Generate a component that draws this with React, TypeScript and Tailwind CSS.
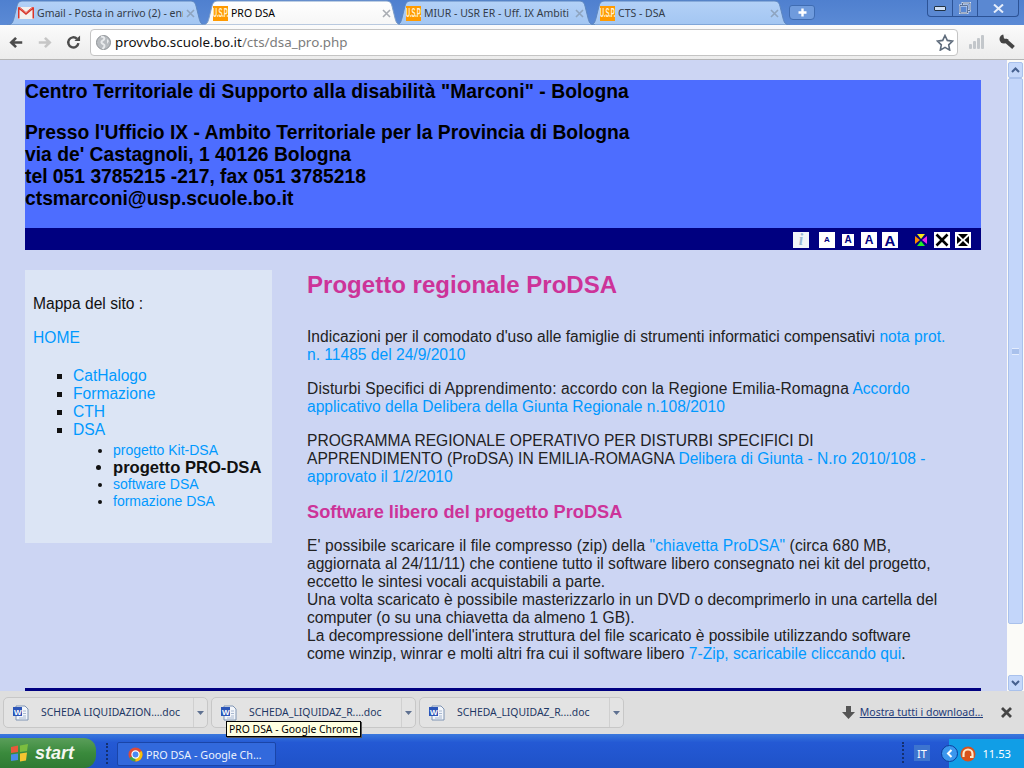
import React from "react";

const sans = "font-['Liberation_Sans',Arial,sans-serif]";
const ui = "font-['Noto_Sans',Verdana,sans-serif]";

function Usp() {
  return (
    <span className="flex h-[15px] w-[15px] shrink-0 items-center justify-center overflow-hidden bg-[#ff9a00] font-['Liberation_Sans',sans-serif] text-[6px] font-bold leading-none tracking-[-0.2px] text-[#fff2d0]">
      <span className="scale-y-[2]">U.S.P.</span>
    </span>
  );
}

function Gmail() {
  return (
    <svg width="16" height="12" viewBox="0 0 16 12" className="shrink-0">
      <rect x="0" y="0" width="16" height="12" fill="#f4f0ee" />
      <path d="M0.7 11.5V1L8 7l7.3-6v10.5" fill="none" stroke="#d8352a" strokeWidth="1.6" />
      <path d="M0 0.5h2L8 5.5l6-5h2" fill="none" stroke="#e2584f" strokeWidth="1" />
    </svg>
  );
}

function TabShape({ active }: { active?: boolean }) {
  const id = active ? "tab-active" : "tab-idle";
  return (
    <svg className="absolute inset-0 h-full w-full" viewBox="0 0 200 25" preserveAspectRatio="none">
      <defs>
        <linearGradient id={id} x1="0" y1="0" x2="0" y2="1">
          <stop offset="0" stopColor={active ? "#ffffff" : "#b3d1f7"} />
          <stop offset="1" stopColor={active ? "#f6f6f6" : "#a3c6f2"} />
        </linearGradient>
      </defs>
      <path
        d="M0 25C5 25 6 22 7 18L10 6C11 2 13 1 16 1H184C187 1 189 2 190 6L193 18C194 22 195 25 200 25Z"
        fill={`url(#${id})`}
        stroke={active ? "#7d9dc8" : "#5d86bf"}
        strokeWidth="1"
        vectorEffect="non-scaling-stroke"
      />
    </svg>
  );
}

function Tab({ title, icon, active, w, ml, z }: { title: string; icon: React.ReactNode; active?: boolean; w: string; ml: string; z: string }) {
  return (
    <div className={`relative flex h-[25px] shrink-0 items-center ${w} ${ml} ${z}`}>
      <TabShape active={active} />
      <div className="relative flex w-full items-center gap-[3px] pl-[11px] pr-[11px] pt-[1px]">
        {icon}
        <span className={`min-w-0 flex-1 overflow-hidden whitespace-nowrap text-[10.5px] leading-[15px] ${ui} ${active ? "text-black" : "text-[#333c49]"}`}>{title}</span>
        <svg width="9" height="9" viewBox="0 0 9 9" className="shrink-0">
          <path d="M1 1l7 7M8 1l-7 7" stroke={active ? "#a9adb3" : "#8ea4bf"} strokeWidth="1.6" />
        </svg>
      </div>
    </div>
  );
}

function TabBar() {
  return (
    <div className="flex h-[25px] shrink-0 items-start bg-gradient-to-b from-[#4f80cf] to-[#5b8ad5]">
      <div className="flex pl-[7px]">
        <Tab title="Gmail - Posta in arrivo (2) - enr" icon={<Gmail />} w="w-[199px]" ml="ml-0" z="z-10" />
        <Tab title="PRO DSA" icon={<Usp />} active w="w-[200px]" ml="ml-[-4px]" z="z-30" />
        <Tab title="MIUR - USR ER - Uff. IX Ambiti" icon={<Usp />} w="w-[200px]" ml="ml-[-7px]" z="z-20" />
        <Tab title="CTS - DSA" icon={<Usp />} w="w-[201px]" ml="ml-[-6px]" z="z-10" />
      </div>
      <div className="ml-[-1px] mt-[5px] flex h-[15px] w-[26px] items-center justify-center rounded-b-[4px] rounded-t-[3px] border border-[#3f6cb2] bg-[#6f9bdd] text-white">
        <svg width="9" height="9" viewBox="0 0 9 9"><path d="M4.5 0.5v8M0.5 4.5h8" stroke="#fff" strokeWidth="2.4" /></svg>
      </div>
      <div className="ml-auto mr-[5px] flex h-[17px] w-[92px] items-center rounded-b-[4px] border border-t-0 border-[#2c5396] bg-[#5a88d2]">
        <div className="flex h-full w-[25px] items-center justify-center border-r border-[#2c5396]">
          <div className="h-[5px] w-[12px] rounded-[1px] border border-[#234] bg-[#cfe0f7]" />
        </div>
        <div className="flex h-full w-[25px] items-center justify-center border-r border-[#2c5396]">
          <svg width="12" height="12" viewBox="0 0 12 12"><path d="M3.5 3V1h7.500v7.500H9M1 3.500h7.500V11H1z" fill="none" stroke="#e6eefb" strokeWidth="1.800" /><path d="M3.500 3V1h7.500v7.500H9M1 3.500h7.500V11H1z" fill="none" stroke="#24406f" strokeWidth="0.7" /></svg>
        </div>
        <div className="flex h-full flex-1 items-center justify-center">
          <svg width="11" height="9" viewBox="0 0 11 9"><path d="M1 0.5l9 8M10 0.5l-9 8" stroke="#e6eefb" strokeWidth="2" /></svg>
        </div>
      </div>
    </div>
  );
}

function Toolbar() {
  return (
    <div className="flex h-[35px] shrink-0 items-center border-b border-[#b5b5b5] bg-gradient-to-b from-[#fbfbfb] to-[#ececec]">
      <div className="flex w-[90px] shrink-0 items-center pl-[9px]">
        <svg width="15" height="13" viewBox="0 0 17 14" className="mr-[13px]"><path d="M15 7H4M8 1.800L2.600 7 8 12.200" fill="none" stroke="#4c4c4c" strokeWidth="3" /></svg>
        <svg width="15" height="13" viewBox="0 0 17 14" className="mr-[14px]"><path d="M2 7h11M9 1.800L14.400 7 9 12.200" fill="none" stroke="#c6c6c6" strokeWidth="3" /></svg>
        <svg width="15" height="15" viewBox="0 0 16 16"><path d="M13.200 8.600A5.400 5.400 0 1 1 11.600 4" fill="none" stroke="#4c4c4c" strokeWidth="2.600" /><path d="M9 6.400h6V0.600z" fill="#4c4c4c" /></svg>
      </div>
      <div className="flex h-[27px] w-[868px] items-center rounded-[4px] border border-[#c4c4c4] bg-white pl-[5px]">
        <svg width="15" height="15" viewBox="0 0 15 15" className="shrink-0">
          <circle cx="7.5" cy="7.5" r="7" fill="#b8bcc0" stroke="#8e9296" />
          <path d="M5 1.500C8 2 9 3 8 4.500S5 5.500 5.500 7.500 9 9 8.500 11 7 13 6.500 14" fill="none" stroke="#e8eaec" strokeWidth="2" />
          <path d="M11 4l2 2-2 3z" fill="#e8eaec" />
        </svg>
        <span className={`ml-[4px] whitespace-nowrap text-[13.4px] leading-[20px] ${ui} text-[#111]`}>
          provvbo.scuole.bo.it<span className="text-[#7c7c7c]">/cts/dsa_pro.php</span>
        </span>
        <svg width="18" height="17" viewBox="0 0 18 17" className="ml-auto mr-[3px] shrink-0">
          <path d="M9 1.500l2.300 4.900 5.300.7-3.900 3.700 1 5.300L9 13.400l-4.700 2.700 1-5.300-3.900-3.700 5.300-.7z" fill="#fff" stroke="#5e6b7b" strokeWidth="1.600" />
        </svg>
      </div>
      <div className="ml-[11px] flex h-[14px] items-end gap-[1px]">
        <div className="h-[5px] w-[3px] rounded-[1px] bg-[#c3c7cb]" />
        <div className="h-[8px] w-[3px] rounded-[1px] bg-[#c3c7cb]" />
        <div className="h-[11px] w-[3px] rounded-[1px] bg-[#c3c7cb]" />
        <div className="h-[14px] w-[3px] rounded-[1px] bg-[#c3c7cb]" />
      </div>
      <svg width="17" height="16" viewBox="0 0 17 16" className="ml-[15px]">
        <circle cx="5" cy="5" r="4.500" fill="#444" />
        <path d="M4 -1L5 4.500 10.500 5.500 10 -1z" fill="#f3f3f3" />
        <path d="M6 6l8.500 7.500" stroke="#444" strokeWidth="4" />
      </svg>
    </div>
  );
}

function A({ children }: { children: React.ReactNode }) {
  return <a className="text-[#0099ff]">{children}</a>;
}

function AccIcon({ size, boxed }: { size: number; boxed?: boolean }) {
  return (
    <span className="relative flex h-[16px] w-[16px] items-center justify-center bg-white">
      {boxed && <span className="absolute inset-0 border-2 border-[#000080]" />}
      <span className={`${sans} font-bold leading-none text-[#000080]`} style={{ fontSize: size }}>A</span>
    </span>
  );
}

function HeaderBlock() {
  return (
    <div className={`${sans} w-[956px] text-black`}>
      <div className="h-[148px] bg-[#4d6dff] pt-[1px] text-[19.3px] font-bold leading-[22px]">
        <p className="tracking-[0.08px]">Centro Territoriale di Supporto alla disabilità "Marconi" - Bologna</p>
        <p className="mt-[19px]">Presso l'Ufficio IX - Ambito Territoriale per la Provincia di Bologna</p>
        <p>via de' Castagnoli, 1 40126 Bologna</p>
        <p>tel 051 3785215 -217, fax 051 3785218</p>
        <p>ctsmarconi@usp.scuole.bo.it</p>
      </div>
      <div className="flex h-[22px] items-center justify-end bg-[#000080] pr-[10px] pt-[2px]">
        <span className="flex h-[16px] w-[16px] items-center justify-center bg-[#f1f5f8] font-['Liberation_Serif',serif] text-[16px] font-bold italic leading-none text-[#9cbad3]">i</span>
        <span className="ml-[10px]"><AccIcon size={8} /></span>
        <span className="ml-[5px]"><AccIcon size={10} boxed /></span>
        <span className="ml-[5px]"><AccIcon size={12} /></span>
        <span className="ml-[5px]"><AccIcon size={15} /></span>
        <svg width="16" height="16" viewBox="0 0 16 16" className="ml-[15px]">
          <rect width="16" height="16" fill="#000080" />
          <path d="M4 2h8L8 7z" fill="#f4e619" />
          <path d="M14 4v8L9 8z" fill="#ee22ee" />
          <path d="M12 14H4l4-5z" fill="#22ee22" />
          <path d="M2 4v8l5-4z" fill="#ff8800" />
        </svg>
        <svg width="16" height="16" viewBox="0 0 16 16" className="ml-[5px]">
          <rect width="16" height="16" fill="#fff" />
          <path d="M2.500 2.500l11 11M13.500 2.500l-11 11" stroke="#000" strokeWidth="2.600" />
        </svg>
        <svg width="16" height="16" viewBox="0 0 16 16" className="ml-[5px]">
          <rect width="16" height="16" fill="#fff" />
          <path d="M3 2h10L8 7zM3 14h10L8 9z" fill="#000" />
          <path d="M2 4v8l4.500-4zM14 4v8L9.500 8z" fill="#000" />
        </svg>
      </div>
    </div>
  );
}

function Sidebar() {
  return (
    <aside className={`${sans} h-[273px] w-[247px] shrink-0 bg-[#dce5f5] pl-[8px] pt-[25px] text-[15.6px] leading-[18px] text-[#111]`}>
      <p>Mappa del sito :</p>
      <p className="mt-[16px]"><A>HOME</A></p>
      <ul className="mt-[20px] list-[square] pl-[40px]">
        <li><A>CatHalogo</A></li>
        <li><A>Formazione</A></li>
        <li><A>CTH</A></li>
        <li>
          <A>DSA</A>
          <ul className="mt-[3px] list-disc pl-[40px] text-[14px] leading-[17px]">
            <li><A>progetto Kit-DSA</A></li>
            <li className="text-[16.6px] font-bold">progetto PRO-DSA</li>
            <li><A>software DSA</A></li>
            <li><A>formazione DSA</A></li>
          </ul>
        </li>
      </ul>
    </aside>
  );
}

function Main() {
  return (
    <main className={`${sans} ml-[35px] w-[640px] pt-[1px] text-[15.6px] leading-[18px] text-[#222]`}>
      <h1 className="text-[24px] font-bold leading-[27px] tracking-[0.03px] text-[#cc3399]">Progetto regionale ProDSA</h1>
      <p className="mt-[30px]">Indicazioni per il comodato d'uso alle famiglie di strumenti informatici compensativi <A>nota prot. n. 11485 del 24/9/2010</A></p>
      <p className="mt-[16px]">
        <span className="tracking-[0.12px]">Disturbi Specifici di Apprendimento: accordo con la Regione Emilia-Romagna</span> <A>Accordo applicativo della Delibera della Giunta Regionale n.108/2010</A>
      </p>
      <p className="mt-[16px]">PROGRAMMA REGIONALE OPERATIVO PER DISTURBI SPECIFICI DI APPRENDIMENTO (ProDSA) IN EMILIA-ROMAGNA <A>Delibera di Giunta - N.ro 2010/108 - approvato il 1/2/2010</A></p>
      <h2 className="mt-[16px] text-[18.2px] font-bold leading-[20px] text-[#cc3399]">Software libero del progetto ProDSA</h2>
      <p className="mt-[15px]">
        <span className="tracking-[0.08px]">E' possibile scaricare il file compresso (zip) della <A>"chiavetta ProDSA"</A> (circa 680 MB,</span> aggiornata al 24/11/11) che contiene tutto il software libero consegnato nei kit del progetto, eccetto le sintesi vocali acquistabili a parte.
        <br />
        Una volta scaricato è possibile masterizzarlo in un DVD o decomprimerlo in una cartella del computer (o su una chiavetta da almeno 1 GB).
        <br />
        La decompressione dell'intera struttura del file scaricato è possibile utilizzando software <span className="tracking-[-0.05px]">come winzip, winrar e molti altri fra cui il software libero</span> <A>7-Zip, scaricabile cliccando qui</A>.
      </p>
    </main>
  );
}

function Scrollbar() {
  const btn = "flex h-[16px] w-[15px] items-center justify-center rounded-[2px] border border-[#a9c1ec] bg-[#c5d8fa]";
  return (
    <div className="flex w-[17px] shrink-0 flex-col bg-[#fbfbf8] px-[1px] pt-[2px]">
      <div className={btn}>
        <svg width="9" height="6" viewBox="0 0 9 6"><path d="M1 5l3.500-3.500L8 5" fill="none" stroke="#46618f" strokeWidth="2" /></svg>
      </div>
      <div className="flex h-[546px] items-center justify-center rounded-[2px] border border-[#a9c1ec] bg-[#c3d6fa]">
        <div className="h-[7px] w-[7px] border-y border-[#e3ecfd] bg-[#a9c1ec]" />
      </div>
      <div className="flex-1" />
      <div className={btn}>
        <svg width="9" height="6" viewBox="0 0 9 6"><path d="M1 1l3.500 3.500L8 1" fill="none" stroke="#46618f" strokeWidth="2" /></svg>
      </div>
    </div>
  );
}

function Page() {
  return (
    <div className="flex h-[631px] shrink-0 bg-[#ccd5f3]">
      <div className="min-w-0 flex-1 overflow-hidden pl-[25px] pt-[20px]">
        <HeaderBlock />
        <div className="mt-[20px] flex">
          <Sidebar />
          <Main />
        </div>
        <div className="mt-[25px] h-[3px] w-[956px] bg-[#000080]" />
      </div>
      <Scrollbar />
    </div>
  );
}

function DocIcon() {
  return (
    <svg width="16" height="16" viewBox="0 0 16 16" className="shrink-0">
      <path d="M3 1h9l3 3v11H3z" fill="#f2f5fa" stroke="#7f94b3" />
      <path d="M10 6h3M10 8.500h3M10 11h3M6 13h7" stroke="#a8b8d0" />
      <rect x="0" y="2" width="9" height="9" fill="#2b55b8" />
      <text x="1" y="9.500" fontSize="8" fontWeight="700" fill="#fff" fontFamily="Liberation Sans, sans-serif">W</text>
    </svg>
  );
}

function Download({ name }: { name: string }) {
  return (
    <div className="flex h-[31px] w-[205px] shrink-0 items-center rounded-[5px] border border-[#c7c7c7] bg-[#e3e3e3] pl-[9px]">
      <DocIcon />
      <span className={`ml-[12px] flex-1 whitespace-nowrap text-[10.4px] leading-[15px] ${ui} text-[#1d3764]`}>{name}</span>
      <div className="flex h-full w-[14px] items-center justify-center border-l border-[#d0d0d0]">
        <svg width="7" height="4" viewBox="0 0 7 4"><path d="M0 0h7L3.500 4z" fill="#5f7191" /></svg>
      </div>
    </div>
  );
}

function DownloadBar() {
  return (
    <div className="relative flex h-[43px] shrink-0 items-start bg-[#dedede] pl-[3px] pt-[6px]">
      <div className="flex gap-[3px]">
        <Download name="SCHEDA LIQUIDAZION....doc" />
        <Download name="SCHEDA_LIQUIDAZ_R....doc" />
        <Download name="SCHEDA_LIQUIDAZ_R....doc" />
      </div>
      <div className="ml-auto mt-[8px] flex items-center pr-[12px]">
        <svg width="13" height="13" viewBox="0 0 13 13" className="mr-[5px]"><path d="M4 0h5v6h4l-6.500 7L0 6h4z" fill="#555" /></svg>
        <span className={`${ui} whitespace-nowrap text-[10.5px] leading-[15px] text-[#1d3a78] underline`}>Mostra tutti i download…</span>
        <svg width="11" height="11" viewBox="0 0 11 11" className="ml-[18px]"><path d="M1 1l9 9M10 1l-9 9" stroke="#444" strokeWidth="2.800" /></svg>
      </div>
      <div className={`absolute left-[226px] top-[30px] z-50 whitespace-nowrap border border-black bg-[#ffffe1] px-[2px] text-[10.4px] leading-[14px] shadow-[1px_1px_0_#555] ${ui} text-black`}>
        PRO DSA - Google Chrome
      </div>
    </div>
  );
}

function Taskbar() {
  return (
    <div className="flex h-[34px] shrink-0 items-stretch bg-gradient-to-b from-[#3a78dd] from-[0%] via-[#2459d4] via-[25%] to-[#1f52c8]">
      <div className="mt-[4px] flex w-[96px] shrink-0 items-center rounded-r-[12px] bg-gradient-to-b from-[#5a9e5a] via-[#3a8a3c] to-[#2f7a33] pl-[10px]">
        <svg width="19" height="18" viewBox="0 0 19 18" className="shrink-0">
          <path d="M1 3l7-1.500V8L1 9z" fill="#e8593a" />
          <path d="M10 1.500L18 0l-1 7-7 1z" fill="#7cbd3f" />
          <path d="M1 10.500L8 9.500V16l-7 1z" fill="#4a8be8" />
          <path d="M10 9.500l7-1-1 8-6 1z" fill="#f6c531" />
        </svg>
        <span className={`${sans} ml-[6px] text-[18px] font-bold italic leading-none text-[#f4f7f1]`}>start</span>
      </div>
      <div className="ml-[10px] mt-[9px] h-[21px] w-[4px] border-l-2 border-dotted border-[#14306f]" />
      <div className="ml-[7px] mt-[8px] flex h-[24px] w-[159px] shrink-0 items-center rounded-[2px] border border-[#1a45a8] bg-[#3269dc] pl-[10px]">
        <svg width="15" height="15" viewBox="0 0 16 16" className="shrink-0">
          <circle cx="8" cy="8" r="7.500" fill="#dd4b39" />
          <path d="M8 8L1.500 11.700A7.500 7.500 0 0 0 8 15.500z" fill="#3da648" />
          <path d="M8 8l6.500-3.700A7.500 7.500 0 0 1 8 15.500z" fill="#f4c20d" />
          <circle cx="8" cy="8" r="3.800" fill="#4a89f3" stroke="#fff" strokeWidth="1.300" />
        </svg>
        <span className={`${ui} ml-[3px] whitespace-nowrap text-[10.8px] leading-[15px] text-[#eef3fd]`}>PRO DSA - Google Ch…</span>
      </div>
      <div className="ml-auto mt-[8px] h-[21px] w-[4px] border-l-2 border-dotted border-[#14306f]" />
      <div className={`ml-[8px] mt-[11px] flex h-[16px] w-[16px] items-center justify-center bg-[#3d74cf] ${ui} text-[11px] leading-none text-white`}>IT</div>
      <div className="ml-[19px] mt-[5px] flex w-[75px] shrink-0 items-center bg-[#119ee6] pr-[13px]">
        <span className="ml-[-8px] flex h-[17px] w-[17px] shrink-0 items-center justify-center rounded-full border border-[#0d3d9b] bg-[#3b97ee]">
          <svg width="7" height="9" viewBox="0 0 7 9"><path d="M5.500 1L2 4.500 5.500 8" fill="none" stroke="#fff" strokeWidth="2" /></svg>
        </span>
        <svg width="16" height="16" viewBox="0 0 16 16" className="ml-[2px] shrink-0">
          <circle cx="8" cy="8" r="7.500" fill="#d8521c" />
          <path d="M3.500 11V8a4.500 4.500 0 0 1 9 0v3H10" fill="none" stroke="#ffe8c8" strokeWidth="2.200" />
        </svg>
        <span className={`${ui} ml-auto text-[11.2px] leading-[15px] text-white`}>11.53</span>
      </div>
    </div>
  );
}

export default function App() {
  return (
    <div className="flex h-[768px] w-[1024px] flex-col overflow-hidden">
      <TabBar />
      <Toolbar />
      <Page />
      <DownloadBar />
      <Taskbar />
    </div>
  );
}
